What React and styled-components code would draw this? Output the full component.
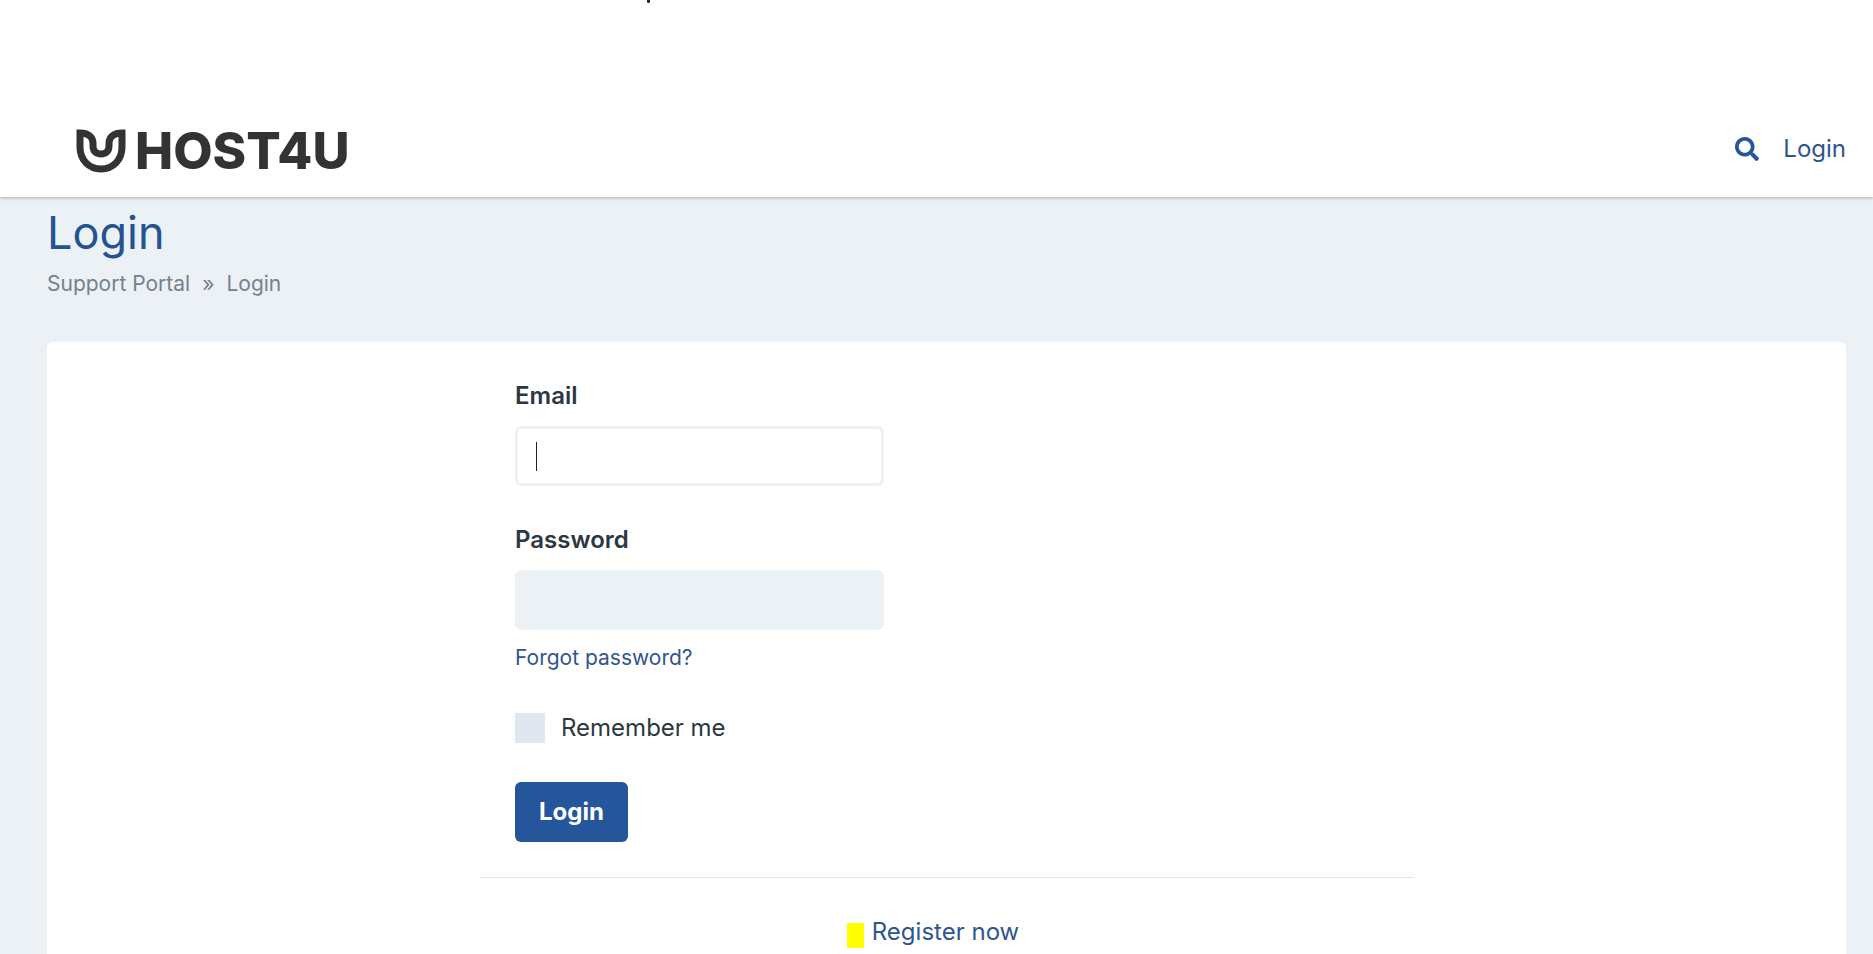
import React from "react";
import styled, { createGlobalStyle } from "styled-components";
import { FaSearch } from "react-icons/fa";

const GlobalStyle = createGlobalStyle`
  *, *::before, *::after { box-sizing: border-box; }
  body {
    margin: 0;
    background: #ecf1f5;
    color: #2d3742;
    font: 400 24px/36px Inter, "Liberation Sans", sans-serif;
  }
`;

const Page = styled.div`
  min-height: 100vh;
  display: flex;
  flex-direction: column;
`;

const Top = styled.div`
  background: #fff;
  box-shadow: 0 1px 3px rgba(40, 45, 50, 0.35);
`;

const Announcement = styled.div`
  display: flex;
  height: 102px;
  padding-left: 647px;
`;

const Dot = styled.span`
  width: 3px;
  height: 3px;
  border-radius: 0 0 2px 2px;
  background: #222;
`;

const Header = styled.header`
  display: flex;
  align-items: center;
  justify-content: space-between;
  height: 95px;
  padding: 0 27px 2px 76px;
`;

const Brand = styled.a`
  display: flex;
  align-items: center;
  gap: 8px;
  padding-top: 4px;
  color: #333;
  font-size: 51px;
  font-weight: 800;
  line-height: 60px;
  text-decoration: none;
`;

const Nav = styled.nav`
  display: flex;
  align-items: center;
  gap: 24px;
`;

const IconButton = styled.button`
  display: flex;
  padding: 0;
  border: 0;
  background: none;
  color: #25559b;
  font-size: 24px;
  cursor: pointer;
`;

const TextLink = styled.a`
  color: #2f5590;
  font-size: ${(p) => (p.$small ? "21px" : "24px")};
  line-height: ${(p) => (p.$small ? "32px" : "36px")};
  text-decoration: none;
`;

const Main = styled.main`
  flex: 1;
  display: flex;
  flex-direction: column;
  padding: 9px 27px 0 47px;
`;

const Title = styled.h1`
  margin: 0 0 8px;
  color: #25538f;
  font-size: 45px;
  line-height: 54px;
  font-weight: 400;
`;

const Breadcrumb = styled.nav`
  display: flex;
  gap: 12px;
  margin-bottom: 42px;
  color: #76808f;
  font-size: 21px;
  line-height: 32px;

  a { color: inherit; text-decoration: none; }
`;

const Card = styled.section`
  flex: 1;
  padding: 36px 36px 0;
  border-radius: 6px 6px 0 0;
  background: #fff;
`;

const Column = styled.div`
  max-width: 935px;
  margin: 0 auto;
`;

const Form = styled.form`
  display: flex;
  flex-direction: column;
  align-items: flex-start;
  gap: 36px;
  padding: 0 36px 35px;
  border-bottom: 1px solid #e2e5e8;
`;

const Field = styled.div`
  display: flex;
  flex-direction: column;
  gap: 12px;
  width: 100%;
  max-width: 369px;
`;

const Label = styled.label`
  font-weight: 600;
`;

const InputWrap = styled.div`
  position: relative;
  display: flex;
`;

const Input = styled.input`
  width: 100%;
  height: 60px;
  padding: 0 18px;
  border: 3px solid #ecf1f4;
  border-radius: 6px;
  outline: 0;
  background: ${(p) => (p.$active ? "#fff" : "#ecf1f5")};
  color: inherit;
  font: inherit;
  caret-color: transparent;
`;

const Caret = styled.span`
  position: absolute;
  top: 16px;
  left: 21px;
  width: 1px;
  height: 29px;
  background: #222;
`;

const CheckRow = styled.label`
  display: flex;
  align-items: center;
  gap: 16px;
`;

const Checkbox = styled.input`
  appearance: none;
  width: 30px;
  height: 30px;
  margin: 0;
  background: #e0e7ef;

  &:checked { background: #25559b; }
`;

const SubmitButton = styled.button`
  height: 60px;
  padding: 0 24px;
  border: 0;
  border-radius: 6px;
  background: #25559b;
  color: #fff;
  font: inherit;
  font-weight: 700;
  cursor: pointer;
`;

const Register = styled.div`
  display: flex;
  align-items: center;
  justify-content: center;
  gap: 8px;
  padding: 36px 27px 36px 0;
`;

const Marker = styled.span`
  width: 17px;
  height: 25px;
  margin-top: 6px;
  background: #ff0;
`;

const LogoMark = () => (
  <svg width="51" height="44" viewBox="0 0 51 44" aria-hidden="true">
    <path
      d="M4 4C12 4 17 8 17 14V17C17 22 20 25 25 25S33 22 33 17V14C33 8 38 4 46 4V18C46 31 37 40 25 40S4 31 4 18Z"
      fill="none"
      stroke="#333"
      strokeWidth="7"
    />
  </svg>
);

export default function App() {
  return (
    <Page>
      <GlobalStyle />
      <Top>
        <Announcement><Dot /></Announcement>
        <Header>
          <Brand href="#"><LogoMark /><span>HOST4U</span></Brand>
          <Nav>
            <IconButton type="button" aria-label="Search"><FaSearch /></IconButton>
            <TextLink href="#">Login</TextLink>
          </Nav>
        </Header>
      </Top>
      <Main>
        <Title>Login</Title>
        <Breadcrumb aria-label="Breadcrumb">
          <a href="#">Support Portal</a>
          <span>»</span>
          <span>Login</span>
        </Breadcrumb>
        <Card>
          <Column>
            <Form>
              <Field>
                <Label htmlFor="email">Email</Label>
                <InputWrap>
                  <Input id="email" type="email" $active />
                  <Caret />
                </InputWrap>
              </Field>
              <Field>
                <Label htmlFor="password">Password</Label>
                <Input id="password" type="password" />
                <TextLink href="#" $small>Forgot password?</TextLink>
              </Field>
              <CheckRow>
                <Checkbox type="checkbox" />
                Remember me
              </CheckRow>
              <SubmitButton type="submit">Login</SubmitButton>
            </Form>
            <Register>
              <Marker />
              <TextLink href="#">Register now</TextLink>
            </Register>
          </Column>
        </Card>
      </Main>
    </Page>
  );
}
